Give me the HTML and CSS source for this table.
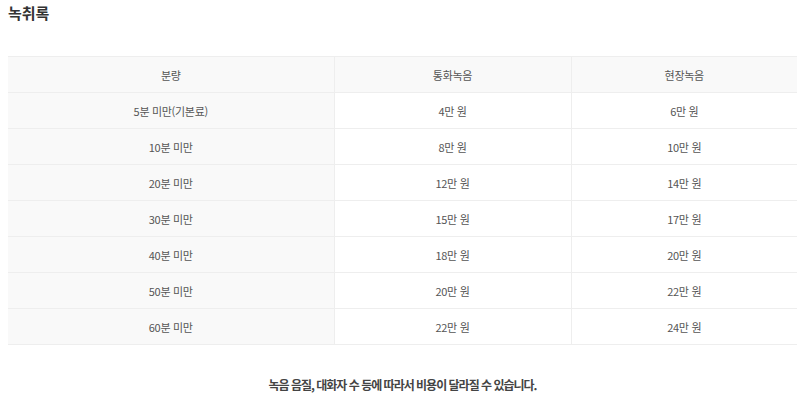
FILE: index.html
```html
<!DOCTYPE html>
<html lang="ko">
<head>
  <meta charset="UTF-8" />
  <meta name="viewport" content="width=device-width, initial-scale=1.0"/>
  <title>녹취록</title>
  <link rel="stylesheet" href="styles.css">
</head>
<body>

  <h2 class="title">녹취록</h2>

  <table class="price-table">
    <colgroup>
      <col class="col-time">
      <col class="col-call">
      <col>
    </colgroup>
    <thead>
      <tr>
        <th>분량</th>
        <th>통화녹음</th>
        <th>현장녹음</th>
      </tr>
    </thead>
    <tbody>
      <tr><th>5분 미만(기본료)</th><td>4만 원</td><td>6만 원</td></tr>
      <tr><th>10분 미만</th><td>8만 원</td><td>10만 원</td></tr>
      <tr><th>20분 미만</th><td>12만 원</td><td>14만 원</td></tr>
      <tr><th>30분 미만</th><td>15만 원</td><td>17만 원</td></tr>
      <tr><th>40분 미만</th><td>18만 원</td><td>20만 원</td></tr>
      <tr><th>50분 미만</th><td>20만 원</td><td>22만 원</td></tr>
      <tr><th>60분 미만</th><td>22만 원</td><td>24만 원</td></tr>
    </tbody>
  </table>

  <!-- 안내 문구 -->
  <p class="note">녹음 음질, 대화자 수 등에 따라서 비용이 달라질 수 있습니다.</p>

</body>
</html>
```

FILE: styles.css
```css
* {
  box-sizing: border-box;
}

body {
  font-family: 'Noto Sans CJK KR', 'Noto Sans', sans-serif;
  background-color: #fff;
  color: #555;
  margin: 0;
  padding: 0 3px 0 8px;
}

.title {
  margin: 0;
  padding-top: 2px;
  height: 56px;
  font-size: 15px;
  line-height: 22px;
  font-weight: 700;
  color: #333;
}

.price-table {
  width: 100%;
  border-collapse: collapse;
  table-layout: fixed;
  font-size: 11px;
  letter-spacing: -0.3px;
  border-top: 1px solid #eee;
}

.col-time {
  width: 326px;
}

.col-call {
  width: 237px;
}

.price-table th,
.price-table td {
  height: 36px;
  padding: 0;
  text-align: center;
  font-weight: 400;
  color: #555;
  border-bottom: 1px solid #eee;
}

.price-table th + th,
.price-table td {
  border-left: 1px solid #eee;
}

.price-table thead th,
.price-table tbody th {
  background-color: #f9f9f9;
}

.note {
  margin: 31px 0 0;
  text-align: center;
  font-size: 12px;
  letter-spacing: -1px;
  font-weight: 700;
  color: #444;
}
```
